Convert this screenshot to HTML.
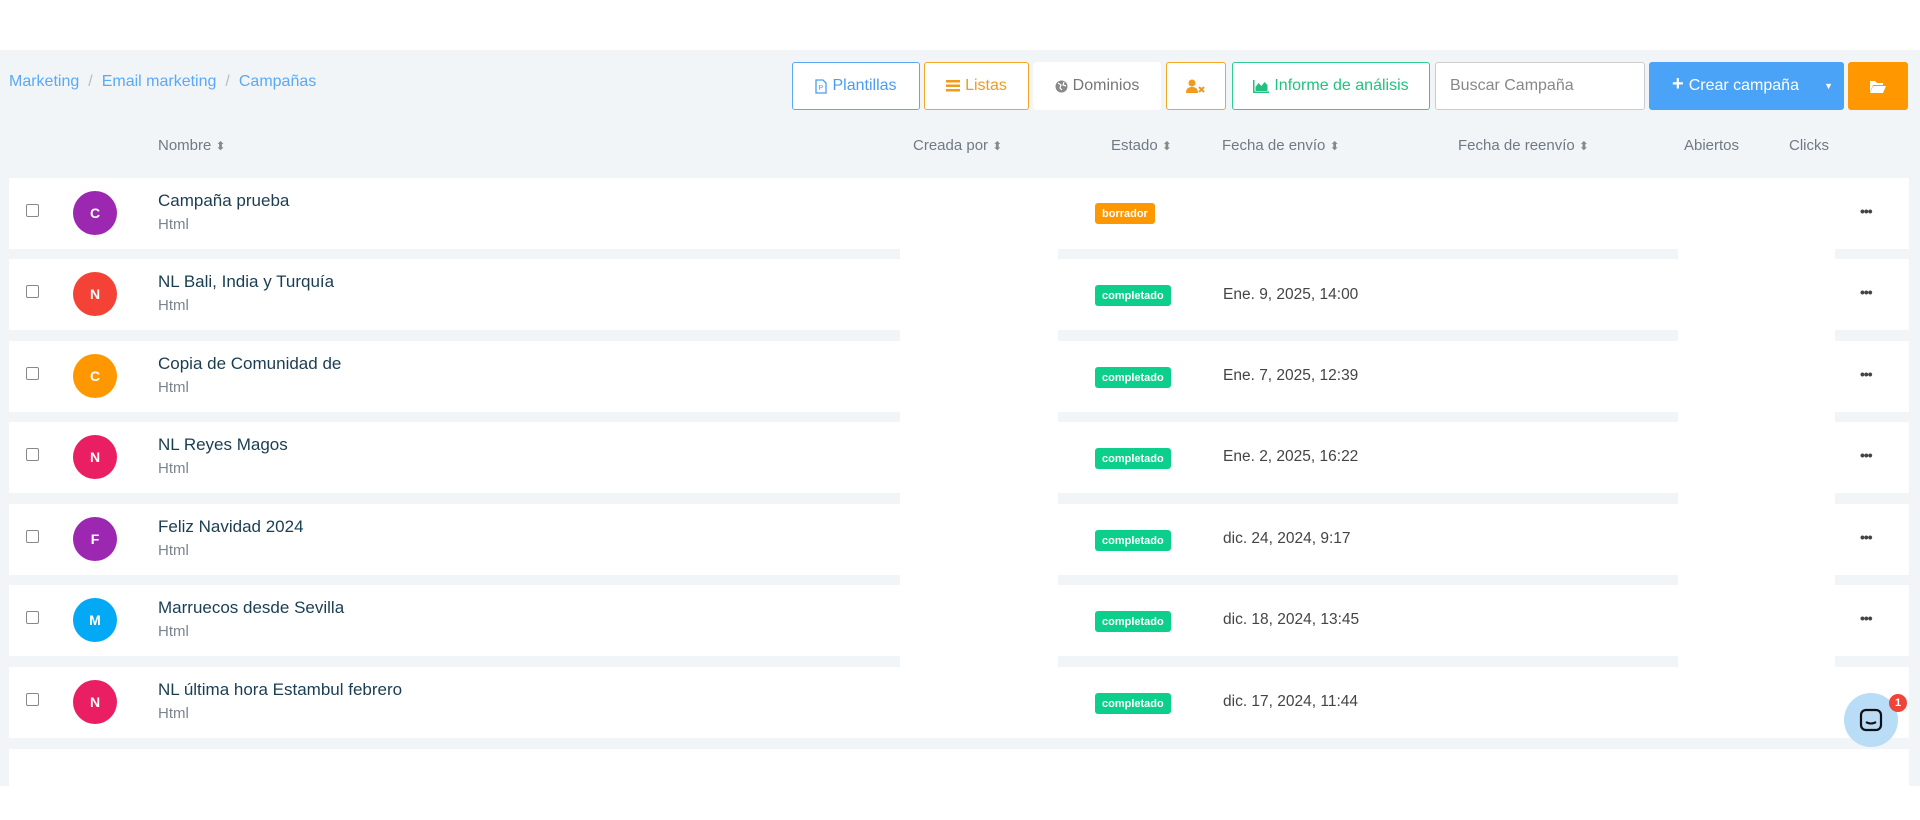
<!DOCTYPE html>
<html><head><meta charset="utf-8"><style>
*{box-sizing:border-box;margin:0;padding:0}
body{width:1920px;height:786px;overflow:hidden;background:#fff;font-family:"Liberation Sans",sans-serif;position:relative}
.bg{position:absolute;left:0;top:50px;width:1920px;height:736px;background:#f1f5f7}
.bc{position:absolute;left:9px;top:73px;font-size:16px;color:#5aa9f5}
.bc span{color:#bbb;margin:0 9px}
.btn{position:absolute;top:62px;height:48px;border:1px solid;border-radius:3px;background:#fff;font-size:16px;display:flex;align-items:center;justify-content:center;gap:5px}
.th{position:absolute;top:137px;font-size:15px;color:#6f7a85}
.th i{font-style:normal;font-size:12px;color:#888}
.row{position:absolute;left:9px;width:1900px;height:71px;background:#fff}
.fill{position:absolute;height:11px;background:#fff}
.cb{position:absolute;left:26px;width:13px;height:13px;border:1px solid #888;border-radius:2px;background:#fff}
.av{position:absolute;left:73px;width:44px;height:44px;border-radius:50%;color:#fff;font-weight:bold;font-size:14px;display:flex;align-items:center;justify-content:center}
.nm{position:absolute;left:158px;font-size:17px;color:#1a3d52}
.sub{position:absolute;left:158px;font-size:15px;color:#7a8590}
.bd{position:absolute;left:1095px;height:21px;border-radius:3px;color:#fff;font-size:11px;font-weight:bold;padding:0 7px;display:flex;align-items:center}
.dt{position:absolute;left:1223px;font-size:15.5px;color:#444}
.dots{position:absolute;left:1860px;font-size:14px;color:#444;font-weight:bold;letter-spacing:-1px}
</style></head><body>
<div class="bg"></div>
<div class="bc">Marketing<span>/</span>Email marketing<span>/</span>Campañas</div>

<div class="btn" style="left:792px;width:128px;border-color:#5aa9f5;color:#4b9cf0"><svg width="12" height="15" viewBox="0 0 12 15"><path d="M1 1h7l3 3v10H1z" fill="none" stroke="#4b9cf0" stroke-width="1.3"/><text x="3.5" y="11" font-size="7" fill="#4b9cf0" font-family="Liberation Sans">P</text></svg>Plantillas</div>
<div class="btn" style="left:924px;width:105px;border-color:#f5a623;color:#f29a1c"><svg width="14" height="12"><g fill="#f29a1c"><rect x="0" y="0" width="14" height="2.5"/><rect x="0" y="4.5" width="14" height="2.5"/><rect x="0" y="9" width="14" height="2.5"/></g></svg>Listas</div>
<div class="btn" style="left:1033px;width:128px;border-color:#fff;color:#777"><svg width="13" height="13"><circle cx="6.5" cy="6.5" r="6" fill="#888"/><path d="M3 3l3 2-1 3 2 2M9 2l-1 3 3 1" stroke="#fff" stroke-width="1.2" fill="none"/></svg>Dominios</div>
<div class="btn" style="left:1166px;width:60px;border-color:#f5a623"><svg width="20" height="15"><circle cx="6" cy="4" r="3.5" fill="#f29a1c"/><path d="M0 14c0-5 3-6 6-6s6 1 6 6z" fill="#f29a1c"/><path d="M13 8l5 5M18 8l-5 5" stroke="#f29a1c" stroke-width="2"/></svg></div>
<div class="btn" style="left:1232px;width:198px;border-color:#2ecc8f;color:#22c17f"><svg width="16" height="13"><path d="M0 0v13h16v-1.5H1.5V0z" fill="#22c17f"/><path d="M2.5 11V7l3-4 3 3 3-4 3 3v6z" fill="#22c17f"/></svg>Informe de análisis</div>
<div class="btn" style="left:1435px;width:210px;border-color:#ccc;color:#888;justify-content:flex-start;padding-left:14px">Buscar Campaña</div>
<div class="btn" style="left:1649px;width:195px;border-color:#4aa3f7;background:#4aa3f7;color:#fff;justify-content:flex-start;padding-left:22px"><b style="font-size:20px;margin-top:-3px">+</b>Crear campaña<span style="position:absolute;right:10px;font-size:9px">▼</span></div>
<div class="btn" style="left:1848px;width:60px;border-color:#ff9800;background:#ff9800"><svg width="16" height="13"><path d="M0 1h5l2 2h6v2H3L0 12z" fill="#fff"/><path d="M3 6h13l-3 7H0z" fill="#fff"/></svg></div>

<div class="th" style="left:158px">Nombre <i>⬍</i></div>
<div class="th" style="left:913px">Creada por <i>⬍</i></div>
<div class="th" style="left:1111px">Estado <i>⬍</i></div>
<div class="th" style="left:1222px">Fecha de envío <i>⬍</i></div>
<div class="th" style="left:1458px">Fecha de reenvío <i>⬍</i></div>
<div class="th" style="left:1684px">Abiertos</div>
<div class="th" style="left:1789px">Clicks</div>

<div class="fill" style="left:900px;top:178px;width:158px;height:560px"></div>
<div class="fill" style="left:1678px;top:178px;width:157px;height:560px"></div>

<div class="row" style="top:178px"></div>
<div class="row" style="top:259px"></div>
<div class="row" style="top:341px"></div>
<div class="row" style="top:422px"></div>
<div class="row" style="top:504px"></div>
<div class="row" style="top:585px"></div>
<div class="row" style="top:667px"></div>
<div class="row" style="top:749px"></div>

<div class="cb" style="top:204px"></div><div class="av" style="top:191px;background:#9c27b0">C</div>
<div class="nm" style="top:191px">Campaña prueba</div><div class="sub" style="top:216px">Html</div>
<div class="bd" style="top:203px;background:#ff9800">borrador</div><div class="dots" style="top:203px">•••</div>

<div class="cb" style="top:285px"></div><div class="av" style="top:272px;background:#f44336">N</div>
<div class="nm" style="top:272px">NL Bali, India y Turquía</div><div class="sub" style="top:297px">Html</div>
<div class="bd" style="top:285px;background:#0ccf8c">completado</div><div class="dt" style="top:286px">Ene. 9, 2025, 14:00</div><div class="dots" style="top:284px">•••</div>

<div class="cb" style="top:367px"></div><div class="av" style="top:354px;background:#ff9800">C</div>
<div class="nm" style="top:354px">Copia de Comunidad de</div><div class="sub" style="top:379px">Html</div>
<div class="bd" style="top:367px;background:#0ccf8c">completado</div><div class="dt" style="top:367px">Ene. 7, 2025, 12:39</div><div class="dots" style="top:366px">•••</div>

<div class="cb" style="top:448px"></div><div class="av" style="top:435px;background:#e91e63">N</div>
<div class="nm" style="top:435px">NL Reyes Magos</div><div class="sub" style="top:460px">Html</div>
<div class="bd" style="top:448px;background:#0ccf8c">completado</div><div class="dt" style="top:448px">Ene. 2, 2025, 16:22</div><div class="dots" style="top:447px">•••</div>

<div class="cb" style="top:530px"></div><div class="av" style="top:517px;background:#9c27b0">F</div>
<div class="nm" style="top:517px">Feliz Navidad 2024</div><div class="sub" style="top:542px">Html</div>
<div class="bd" style="top:530px;background:#0ccf8c">completado</div><div class="dt" style="top:530px">dic. 24, 2024, 9:17</div><div class="dots" style="top:529px">•••</div>

<div class="cb" style="top:611px"></div><div class="av" style="top:598px;background:#03a9f4">M</div>
<div class="nm" style="top:598px">Marruecos desde Sevilla</div><div class="sub" style="top:623px">Html</div>
<div class="bd" style="top:611px;background:#0ccf8c">completado</div><div class="dt" style="top:611px">dic. 18, 2024, 13:45</div><div class="dots" style="top:610px">•••</div>

<div class="cb" style="top:693px"></div><div class="av" style="top:680px;background:#e91e63">N</div>
<div class="nm" style="top:680px">NL última hora Estambul febrero</div><div class="sub" style="top:705px">Html</div>
<div class="bd" style="top:693px;background:#0ccf8c">completado</div><div class="dt" style="top:693px">dic. 17, 2024, 11:44</div>

<div style="position:absolute;left:1844px;top:693px;width:54px;height:54px;border-radius:50%;background:#b9dcf7;display:flex;align-items:center;justify-content:center"><svg width="24" height="24"><rect x="2" y="2" width="20" height="20" rx="5" fill="none" stroke="#111" stroke-width="2.2"/><path d="M7 14c3 2 7 2 10 0" stroke="#111" stroke-width="2" fill="none"/></svg></div>
<div style="position:absolute;left:1889px;top:694px;width:18px;height:18px;border-radius:50%;background:#f04438;color:#fff;font-size:11px;font-weight:bold;display:flex;align-items:center;justify-content:center">1</div>
</body></html>
